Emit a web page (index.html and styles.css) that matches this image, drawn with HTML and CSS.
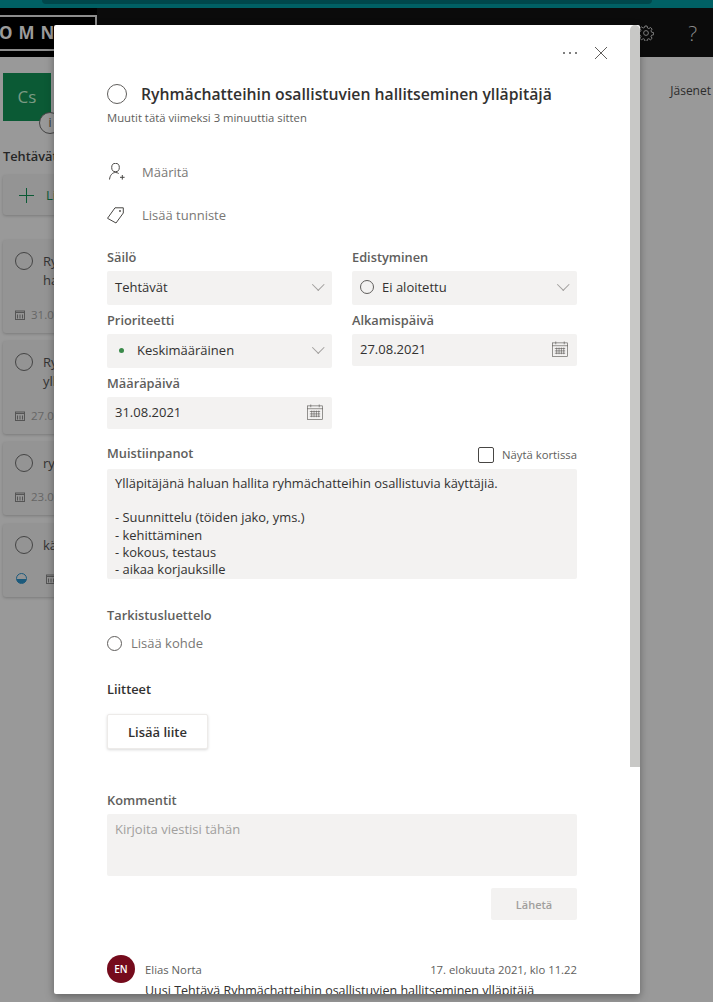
FILE: index.html
```html
<!DOCTYPE html>
<html lang="fi">
<head>
    <meta charset="UTF-8">
    <meta name="viewport" content="width=device-width, initial-scale=1.0">
    <title>Tehtävät</title>
    <link rel="stylesheet" href="styles.css">
</head>
<body>
    <div class="topstrip"><div class="topstrip-inner"></div></div>
    <header class="appbar">
        <div class="logo"><div class="logo-box">OMNIA</div></div>
        <div class="appbar-icons">
            <svg class="gear" viewBox="0 0 16 16" width="16" height="16"><circle cx="8" cy="8" r="2.4"/><path d="M6.9 1h2.2l.4 2 1.3.6 1.8-1.1 1.5 1.6-1.1 1.7.6 1.4 2 .4v2.2l-2 .4-.6 1.3 1.1 1.8-1.6 1.500-1.700-1.100-1.400.6-.4 2H6.900l-.4-2-1.300-.6-1.800 1.100-1.500-1.600 1.100-1.700-.6-1.400-2-.4V6.900l2-.4.6-1.300-1.100-1.800 1.600-1.500 1.700 1.100 1.400-.6z"/></svg>
            <span class="help">?</span>
        </div>
    </header>

    <div class="backdrop-page">
        <aside class="board">
            <div class="team-tile">Cs<span class="info-badge">i</span></div>
            <div class="board-title">Tehtävät</div>
            <div class="add-task">
                <svg class="plus" viewBox="0 0 15 15" width="15" height="15"><path d="M7.5 0v15M0 7.5h15"/></svg>
                Lisää tehtävä
            </div>
            <div class="task-card tall">
                <div class="task-head"><span class="ring"></span><span>Ryhmächatteihin<br>hallitseminen</span></div>
                <div class="task-date"><svg class="cal-small" viewBox="0 0 10 10"><rect x=".5" y="1" width="9" height="8.5"/><path d="M0 2.5h10M2.500 4.500v4M5 4.500v4M7.500 4.500v4"/></svg>31.08</div>
            </div>
            <div class="task-card tall">
                <div class="task-head"><span class="ring"></span><span>Ryhmächatteihin<br>ylläpitäjä</span></div>
                <div class="task-date"><svg class="cal-small" viewBox="0 0 10 10"><rect x=".5" y="1" width="9" height="8.5"/><path d="M0 2.5h10M2.500 4.500v4M5 4.500v4M7.500 4.500v4"/></svg>27.08</div>
            </div>
            <div class="task-card short">
                <div class="task-head"><span class="ring"></span><span>ryhmä</span></div>
                <div class="task-date"><svg class="cal-small" viewBox="0 0 10 10"><rect x=".5" y="1" width="9" height="8.5"/><path d="M0 2.5h10M2.500 4.500v4M5 4.500v4M7.500 4.500v4"/></svg>23.08</div>
            </div>
            <div class="task-card short">
                <div class="task-head"><span class="ring"></span><span>käyttäjä</span></div>
                <div class="task-date"><span class="half-dot"></span><svg class="cal-small gap" viewBox="0 0 10 10"><rect x=".5" y="1" width="9" height="8.5"/><path d="M0 2.5h10M2.500 4.500v4M5 4.500v4M7.500 4.500v4"/></svg></div>
            </div>
        </aside>
        <div class="members">Jäsenet</div>
    </div>

    <section class="modal">
        <div class="modal-scroll">
            <div class="modal-actions">
                <span class="more"><i></i><i></i><i></i></span>
                <svg class="close" viewBox="0 0 14 14" width="14" height="14"><path d="M1 1l12 12M13 1L1 13"/></svg>
            </div>

            <div class="title-row">
                <span class="ring big"></span>
                <h1>Ryhmächatteihin osallistuvien hallitseminen ylläpitäjä</h1>
            </div>
            <p class="edited">Muutit tätä viimeksi 3 minuuttia sitten</p>

            <div class="meta-row assign">
                <svg class="meta-icon" viewBox="0 0 18 18" width="18" height="18"><ellipse cx="8.500" cy="4.500" rx="3.800" ry="4.200"/><path d="M2.500 16.500C3 12 5.500 9.500 8.500 9.500c1.200 0 2.300.3 3.200 1M15.300 12v4.600M13 14.300h4.600"/></svg>
                <span>Määritä</span>
            </div>
            <div class="meta-row label-row">
                <svg class="meta-icon" viewBox="0 0 18 18" width="18" height="18"><path d="M.5 12.300L8 1.800h8.300V7L9 17z"/><circle cx="13" cy="5" r=".6"/></svg>
                <span>Lisää tunniste</span>
            </div>

            <div class="field-grid">
                <div class="field">
                    <label>Säilö</label>
                    <div class="control"><span>Tehtävät</span><span class="chevron"></span></div>
                </div>
                <div class="field">
                    <label>Edistyminen</label>
                    <div class="control"><span class="with-icon"><span class="ring small"></span>Ei aloitettu</span><span class="chevron"></span></div>
                </div>
                <div class="field">
                    <label>Prioriteetti</label>
                    <div class="control"><span class="with-icon"><span class="dot"></span>Keskimääräinen</span><span class="chevron"></span></div>
                </div>
                <div class="field">
                    <label>Alkamispäivä</label>
                    <div class="control date"><span>27.08.2021</span>
                        <svg class="cal" viewBox="0 0 17 17" width="16" height="16"><rect x=".5" y="2" width="16" height="14.5"/><path d="M0 5h17M4 .5v3M13 .5v3M3 8h11M3 10.500h11M3 13h11M5 7v7M7.500 7v7M10 7v7M12.500 7v7"/></svg>
                    </div>
                </div>
                <div class="field">
                    <label>Määräpäivä</label>
                    <div class="control date"><span>31.08.2021</span>
                        <svg class="cal" viewBox="0 0 17 17" width="16" height="16"><rect x=".5" y="2" width="16" height="14.5"/><path d="M0 5h17M4 .5v3M13 .5v3M3 8h11M3 10.500h11M3 13h11M5 7v7M7.500 7v7M10 7v7M12.500 7v7"/></svg>
                    </div>
                </div>
            </div>

            <div class="notes-head">
                <label>Muistiinpanot</label>
                <span class="show-on-card"><span class="checkbox"></span>Näytä kortissa</span>
            </div>
            <div class="notes">Ylläpitäjänä haluan hallita ryhmächatteihin osallistuvia käyttäjiä.<br><br>- Suunnittelu (töiden jako, yms.)<br>- kehittäminen<br>- kokous, testaus<br>- aikaa korjauksille</div>

            <h2 class="checklist-title">Tarkistusluettelo</h2>
            <div class="add-item"><span class="ring check"></span>Lisää kohde</div>

            <h2 class="attach-title">Liitteet</h2>
            <button class="attach-btn">Lisää liite</button>

            <h2 class="comments-title">Kommentit</h2>
            <div class="comment-box">Kirjoita viestisi tähän</div>
            <div class="send-row"><button class="send-btn">Lähetä</button></div>

            <div class="comment">
                <span class="avatar">EN</span>
                <span>Elias Norta</span>
                <span class="when">17. elokuuta 2021, klo 11.22</span>
            </div>
            <p class="comment-text">Uusi Tehtävä Ryhmächatteihin osallistuvien hallitseminen ylläpitäjä</p>
        </div>
        <div class="scrolltrack"><div class="scrollthumb"></div></div>
    </section>
</body>
</html>
```

FILE: styles.css
```css
* {
    box-sizing: border-box;
}

html, body {
    height: 100%;
}

body {
    margin: 0;
    font-family: "Open Sans", "Noto Sans", sans-serif;
    background: #999999;
    color: #323130;
    overflow: hidden;
}

/* dimmed page behind the dialog */
.topstrip {
    height: 8px;
    background: #006064;
}

.topstrip-inner {
    height: 4px;
    margin: 0 61px 0 42px;
    background: #00474b;
    border-radius: 0 0 6px 6px;
}

.appbar {
    height: 49px;
    background: #0b0b0b;
    display: flex;
    justify-content: space-between;
}

.logo {
    width: 97px;
    padding-top: 7px;
    background: #000;
}

.logo-box {
    height: 36px;
    border: 2px solid #8c8c8c;
    border-left: 0;
    color: #9b9b9b;
    font-size: 17px;
    font-weight: 700;
    line-height: 32px;
    letter-spacing: 6px;
    text-indent: -1px;
    white-space: nowrap;
    overflow: hidden;
}

.appbar-icons {
    display: flex;
    align-items: center;
    gap: 34px;
    padding-right: 16px;
    margin-top: 1px;
}

.gear {
    fill: none;
    stroke: #8a8a8a;
    stroke-width: .9;
}

.help {
    color: #8a8a8a;
    font-size: 21px;
    font-weight: 300;
}

.backdrop-page {
    display: flex;
    justify-content: space-between;
    height: 945px;
}

.board {
    width: 200px;
    padding: 16px 0 0 3px;
}

.team-tile {
    position: relative;
    width: 48px;
    height: 48px;
    background: #0b5a35;
    color: #7c9a84;
    font-size: 17px;
    line-height: 48px;
    text-align: center;
}

.info-badge {
    position: absolute;
    left: 36px;
    top: 39px;
    width: 22px;
    height: 22px;
    border: 1px solid #444;
    border-radius: 50%;
    background: #999;
    color: #333;
    font-size: 12px;
    line-height: 20px;
}

.board-title {
    margin-top: 25px;
    font-size: 12.8px;
    font-weight: 600;
    line-height: 20px;
    color: #262626;
}

.add-task {
    display: flex;
    align-items: center;
    gap: 12px;
    height: 40px;
    margin-top: 9px;
    padding-left: 16px;
    border-radius: 3px;
    background: #949494;
    box-shadow: 0 1px 3px rgba(0, 0, 0, .2);
    color: #0b5a35;
    font-size: 13px;
}

.plus {
    fill: none;
    stroke: #0b5a35;
    stroke-width: 1;
}

.task-card {
    margin-top: 8px;
    padding: 12px;
    border-radius: 3px;
    background: #949494;
    box-shadow: 0 1px 3px rgba(0, 0, 0, .2);
    font-size: 13px;
    line-height: 19px;
    color: #333;
    white-space: nowrap;
}

.add-task + .task-card {
    margin-top: 25px;
}

.task-card.tall {
    height: 93px;
}

.task-card.short {
    height: 73px;
}

.short + .short {
    margin-top: 9px;
}

.task-head {
    display: flex;
    gap: 10px;
}

.task-head .ring {
    flex: none;
    width: 18px;
    height: 18px;
    border-color: #444;
}

.task-date {
    display: flex;
    align-items: center;
    gap: 6px;
    min-height: 19px;
    margin-top: 15px;
    font-size: 11.5px;
    color: #666;
}

.short .task-date {
    margin-top: 14px;
}

.cal-small {
    width: 10px;
    height: 10px;
    fill: none;
    stroke: #555;
    stroke-width: 1;
}

.cal-small.gap {
    margin-left: 13px;
}

.half-dot {
    width: 11px;
    height: 11px;
    margin-left: 1px;
    border-radius: 50%;
    background: linear-gradient(#949494 50%, #1b5a7c 50%);
    border: 1px solid #1b5a7c;
}

.members {
    padding: 25px 2px 0 0;
    font-size: 12px;
    color: #2c2c2c;
}

/* the task dialog */
.modal {
    position: absolute;
    left: 54px;
    top: 25px;
    width: 586px;
    height: 969px;
    background: #fff;
    border-radius: 2px;
    box-shadow: 0 3px 8px rgba(0, 0, 0, .35);
    overflow: hidden;
}

.modal-scroll {
    height: 969px;
    padding: 0 63px 0 53px;
    overflow: hidden;
}

.scrolltrack {
    position: absolute;
    top: 0;
    right: 0;
    bottom: 0;
    width: 10px;
}

.scrollthumb {
    height: 742px;
    border-radius: 5px 5px 0 0;
    background: #c8c8c6;
}

.modal-actions {
    display: flex;
    justify-content: flex-end;
    align-items: center;
    gap: 17px;
    height: 14px;
    margin-top: 21px;
    margin-right: -31px;
}

.more {
    display: flex;
    gap: 4px;
}

.more i {
    width: 2px;
    height: 2px;
    border-radius: 50%;
    background: #555;
}

.close {
    fill: none;
    stroke: #605e5c;
    stroke-width: 1;
}

.title-row {
    display: flex;
    align-items: center;
    gap: 14px;
    margin-top: 22px;
    height: 24px;
}

.ring {
    display: inline-block;
    border: 1px solid #605e5c;
    border-radius: 50%;
}

.ring.big {
    flex: none;
    width: 20px;
    height: 20px;
    border-width: 1.5px;
}

h1 {
    margin: 0;
    font-size: 15.75px;
    font-weight: 600;
    line-height: 24px;
    white-space: nowrap;
    color: #323130;
}

.edited {
    margin: 4px 0 0;
    font-size: 11.3px;
    line-height: 16px;
    color: #605e5c;
}

.meta-row {
    display: flex;
    align-items: center;
    gap: 17px;
    height: 20px;
    font-size: 13px;
    color: #797775;
}

.meta-row.assign {
    margin-top: 36px;
}

.meta-row.label-row {
    margin-top: 23px;
}

.meta-icon {
    fill: none;
    stroke: #484644;
    stroke-width: 1;
}

.field-grid {
    display: grid;
    grid-template-columns: 225px 225px;
    column-gap: 20px;
    row-gap: 6px;
    margin-top: 23px;
}

label, h2 {
    display: block;
    margin: 0;
    font-size: 12.8px;
    font-weight: 600;
    line-height: 18px;
    color: #605e5c;
}

.field {
    height: 57px;
}

.field label {
    height: 23px;
}

.control {
    display: flex;
    justify-content: space-between;
    align-items: center;
    height: 34px;
    padding: 0 8px 2px;
    border-radius: 2px;
    background: #f3f2f1;
    font-size: 13px;
    color: #323130;
}

.control.date {
    height: 32px;
}

.with-icon {
    display: flex;
    align-items: center;
}

.ring.small {
    width: 14px;
    height: 14px;
    margin-right: 8px;
}

.dot {
    width: 5px;
    height: 5px;
    margin: 0 13px 0 4px;
    border-radius: 50%;
    background: #3a8a4a;
}

.chevron {
    width: 8.5px;
    height: 8.5px;
    margin: -5px 2px 0 0;
    border-right: 1px solid #a19f9d;
    border-bottom: 1px solid #a19f9d;
    transform: rotate(45deg);
}

.cal {
    margin-right: 1px;
    fill: none;
    stroke: #605e5c;
    stroke-width: .7;
}

.notes-head {
    display: flex;
    justify-content: space-between;
    align-items: center;
    margin-top: 12px;
    height: 20px;
}

.show-on-card {
    display: flex;
    align-items: center;
    gap: 8px;
    margin-top: 3px;
    font-size: 11.3px;
    color: #605e5c;
}

.checkbox {
    width: 16px;
    height: 16px;
    border: 1px solid #484644;
    border-radius: 2px;
}

.notes {
    height: 110px;
    margin-top: 6px;
    padding: 6px 8px 0;
    border-radius: 2px;
    background: #f3f2f1;
    font-size: 12.9px;
    line-height: 17.2px;
    color: #323130;
    overflow: hidden;
}

.checklist-title {
    margin-top: 27px;
}

.add-item {
    display: flex;
    align-items: center;
    gap: 9px;
    margin-top: 9px;
    height: 20px;
    font-size: 13px;
    color: #797775;
}

.ring.check {
    width: 15px;
    height: 15px;
}

.attach-title {
    margin-top: 27px;
    color: #323130;
}

.attach-btn {
    display: block;
    width: 101px;
    height: 35px;
    margin-top: 16px;
    border: 1px solid #edebe9;
    border-radius: 2px;
    background: #fff;
    box-shadow: 0 1px 3px rgba(0, 0, 0, .15);
    font-family: inherit;
    font-size: 13px;
    font-weight: 600;
    color: #323130;
}

.comments-title {
    margin-top: 42px;
}

.comment-box {
    height: 62px;
    margin-top: 5px;
    padding: 6px 8px;
    border-radius: 2px;
    background: #f3f2f1;
    font-size: 13px;
    line-height: 18px;
    color: #a19f9d;
}

.send-row {
    display: flex;
    justify-content: flex-end;
    margin-top: 12px;
}

.send-btn {
    width: 86px;
    height: 32px;
    border: 0;
    border-radius: 2px;
    background: #f3f2f1;
    font-family: inherit;
    font-size: 11px;
    font-weight: 600;
    color: #a19f9d;
}

.comment {
    display: flex;
    align-items: center;
    margin-top: 35px;
    height: 28px;
    font-size: 11.3px;
    color: #605e5c;
}

.avatar {
    width: 28px;
    height: 28px;
    margin-right: 10px;
    border-radius: 50%;
    background: #750b1c;
    color: #fff;
    font-size: 10px;
    font-weight: 600;
    line-height: 28px;
    text-align: center;
}

.when {
    margin-left: auto;
}

.comment-text {
    margin: 0 0 0 38px;
    font-size: 12.5px;
    line-height: 16px;
    white-space: nowrap;
    color: #323130;
}
```
